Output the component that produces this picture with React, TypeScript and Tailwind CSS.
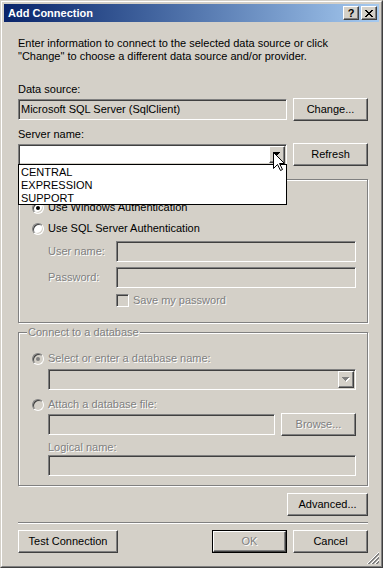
import React from 'react';

// classic 3D borders
const raised =
  'border border-t-white border-l-white border-r-[#404040] border-b-[#404040] shadow-[inset_-1px_-1px_0_#808080]';
const sunken =
  'border border-t-[#808080] border-l-[#808080] border-r-white border-b-white shadow-[inset_1px_1px_0_#404040,inset_-1px_-1px_0_#D4D0C8]';
const grey = 'text-[#808080] [text-shadow:1px_1px_0_#fff]';

const Button = ({ label, className = 'w-[75px]', disabled = false }: { label: string; className?: string; disabled?: boolean }) => (
  <div className={`flex h-[23px] shrink-0 items-center justify-center bg-[#D4D0C8] ${raised} ${className} ${disabled ? grey : 'text-black'}`}>
    {label}
  </div>
);

const Arrow = ({ disabled = false }: { disabled?: boolean }) => (
  <svg width="8" height="5" viewBox="0 0 8 5" shapeRendering="crispEdges">
    {disabled && (
      <g fill="#fff">
        <rect x="1" y="1" width="7" height="1" />
        <rect x="2" y="2" width="5" height="1" />
        <rect x="3" y="3" width="3" height="1" />
        <rect x="4" y="4" width="1" height="1" />
      </g>
    )}
    <g fill={disabled ? '#808080' : '#000'}>
      <rect x="0" y="0" width="7" height="1" />
      <rect x="1" y="1" width="5" height="1" />
      <rect x="2" y="2" width="3" height="1" />
      <rect x="3" y="3" width="1" height="1" />
    </g>
  </svg>
);

const Combo = ({ className, disabled = false, children }: { className: string; disabled?: boolean; children?: React.ReactNode }) => (
  <div className={`relative flex h-[21px] shrink-0 p-[1px] ${sunken} ${disabled ? 'bg-[#D4D0C8]' : 'bg-white'} ${className}`}>
    <div className="flex-1" />
    <div className={`flex h-full w-[16px] items-center justify-center bg-[#D4D0C8] ${raised}`}>
      <Arrow disabled={disabled} />
    </div>
    {children}
  </div>
);

const Field = ({ className, text }: { className: string; text?: string }) => (
  <div className={`flex h-[21px] shrink-0 items-center bg-[#D4D0C8] pl-[2px] ${sunken} ${className}`}>{text}</div>
);

const Radio = ({ checked = false, disabled = false }: { checked?: boolean; disabled?: boolean }) => (
  <span
    className={`flex h-[12px] w-[12px] shrink-0 items-center justify-center rounded-full border border-t-[#808080] border-l-[#808080] border-r-white border-b-white shadow-[inset_1px_1px_0_#404040,inset_-1px_-1px_0_#D4D0C8] ${disabled ? 'bg-[#D4D0C8]' : 'bg-white'}`}
  >
    {checked && <span className={`h-[4px] w-[4px] rounded-full ${disabled ? 'bg-[#808080]' : 'bg-black'}`} />}
  </span>
);

// label is hidden under the open dropdown for the first group, so it's optional
const Group = ({ label, className, children }: { label?: string; className: string; children: React.ReactNode }) => (
  <div className={`relative flex flex-col border border-[#808080] pl-[13px] shadow-[inset_1px_1px_0_#fff,1px_1px_0_#fff] ${className}`}>
    {label && <span className={`absolute -top-[7px] left-[8px] bg-[#D4D0C8] px-[1px] ${grey}`}>{label}</span>}
    {children}
  </div>
);

const Cursor = () => (
  <svg width="13" height="20" viewBox="0 0 13 20" className="absolute left-[254px] top-[7px] z-20">
    <path d="M0.5 0.5 L0.5 16.5 L4.5 12.5 L7.5 18.5 L9.5 17.5 L6.5 11.5 L11.5 11.5 Z" fill="#fff" stroke="#000" strokeWidth="1" />
  </svg>
);

const Grip = () => (
  <svg width="12" height="12" viewBox="0 0 12 12" className="absolute bottom-0 right-0">
    <g strokeWidth="1">
      <path d="M12 0 L0 12" stroke="#fff" />
      <path d="M12 1 L1 12 M12 2 L2 12" stroke="#808080" />
      <path d="M12 4 L4 12" stroke="#fff" />
      <path d="M12 5 L5 12 M12 6 L6 12" stroke="#808080" />
      <path d="M12 8 L8 12" stroke="#fff" />
      <path d="M12 9 L9 12 M12 10 L10 12" stroke="#808080" />
    </g>
  </svg>
);

const App = () => {
  const servers = ['CENTRAL', 'EXPRESSION', 'SUPPORT'];

  return (
    <div className="h-[571px] w-[386px] bg-white font-['Liberation_Sans',Arial,sans-serif] text-[11px] leading-[13px] text-black">
      <div className="h-[568px] w-[383px] border border-t-[#D4D0C8] border-l-[#D4D0C8] border-r-[#404040] border-b-[#404040]">
        <div className="flex h-full w-full flex-col border border-t-white border-l-white border-r-[#808080] border-b-[#808080] bg-[#D4D0C8] p-[2px]">
          {/* caption */}
          <div className="flex h-[18px] shrink-0 items-center bg-linear-to-r from-[#0A246A] to-[#A6CAF0] pl-[4px] pr-[2px]">
            <span className="flex-1 pt-[1px] font-bold text-white">Add Connection</span>
            <div className={`flex h-[14px] w-[16px] items-center justify-center bg-[#D4D0C8] font-bold ${raised}`}>?</div>
            <div className={`ml-[2px] flex h-[14px] w-[16px] items-center justify-center bg-[#D4D0C8] ${raised}`}>
              <svg width="8" height="7" viewBox="0 0 8 7" shapeRendering="crispEdges">
                <path d="M0 0h2v1h1v1h2v-1h1v-1h2v1h-1v1h-1v1h-1v1h1v1h1v1h1v1h-2v-1h-1v-1h-2v1h-1v1h-2v-1h1v-1h1v-1h1v-1h-1v-1h-1v-1h-1z" fill="#000" />
              </svg>
            </div>
          </div>

          {/* client area */}
          <div className="relative flex flex-1 flex-col pl-[14px] pr-[11px]">
            <p className="mt-[15px]">
              Enter information to connect to the selected data source or click
              <br />
              "Change" to choose a different data source and/or provider.
            </p>

            <span className="mt-[20px]">Data source:</span>
            <div className="mt-[2px] flex h-[23px] items-center justify-between">
              <Field className="w-[269px]" text="Microsoft SQL Server (SqlClient)" />
              <Button label="Change..." />
            </div>

            <span className="mt-[7px]">Server name:</span>
            <div className="mt-[2px] flex h-[23px] items-center justify-between">
              <Combo className="w-[269px]">
                <Cursor />
                <div className="absolute left-[-1px] top-full z-10 w-[269px] border border-black bg-white">
                  {servers.map((s) => (
                    <div key={s} className="h-[13px] pl-[2px] pt-[1px]">
                      {s}
                    </div>
                  ))}
                </div>
              </Combo>
              <Button label="Refresh" />
            </div>

            <Group className="mt-[13px] h-[144px]">
              <div className="mt-[21px] flex h-[13px] items-center gap-[4px]">
                <Radio checked />
                <span>Use Windows Authentication</span>
              </div>
              <div className="mt-[8px] flex h-[13px] items-center gap-[4px]">
                <Radio />
                <span>Use SQL Server Authentication</span>
              </div>
              <div className="mt-[6px] flex items-center pl-[16px]">
                <span className={`w-[68px] ${grey}`}>User name:</span>
                <Field className="w-[240px]" />
              </div>
              <div className="mt-[5px] flex items-center pl-[16px]">
                <span className={`w-[68px] ${grey}`}>Password:</span>
                <Field className="w-[240px]" />
              </div>
              <div className="mt-[6px] flex h-[13px] items-center gap-[4px] pl-[84px]">
                <span className={`h-[13px] w-[13px] shrink-0 bg-[#D4D0C8] ${sunken}`} />
                <span className={grey}>Save my password</span>
              </div>
            </Group>

            <Group label="Connect to a database" className="mt-[9px] h-[154px]">
              <div className="mt-[19px] flex h-[13px] items-center gap-[4px]">
                <Radio checked disabled />
                <span className={grey}>Select or enter a database name:</span>
              </div>
              <div className="mt-[4px] pl-[16px]">
                <Combo className="w-[308px]" disabled />
              </div>
              <div className="mt-[8px] flex h-[13px] items-center gap-[4px]">
                <Radio disabled />
                <span className={grey}>Attach a database file:</span>
              </div>
              <div className="mt-[2px] flex h-[23px] items-center gap-[6px] pl-[16px]">
                <Field className="w-[227px]" />
                <Button label="Browse..." disabled />
              </div>
              <span className={`mt-[5px] pl-[16px] ${grey}`}>Logical name:</span>
              <div className="mt-[1px] pl-[16px]">
                <Field className="w-[308px]" />
              </div>
            </Group>

            <div className="mt-[7px] flex justify-end">
              <Button label="Advanced..." className="w-[81px]" />
            </div>

            <div className="mt-[6px] h-[2px] border-t border-b border-t-[#808080] border-b-white" />

            <div className="mt-[6px] flex items-center">
              <Button label="Test Connection" className="w-[100px]" />
              <div className="ml-auto h-[23px] w-[75px] border border-black">
                <div className={`flex h-full w-full items-center justify-center bg-[#D4D0C8] ${raised} ${grey}`}>OK</div>
              </div>
              <Button label="Cancel" className="ml-[6px] w-[75px]" />
            </div>

            <Grip />
          </div>
        </div>
      </div>
    </div>
  );
};

export default App;
